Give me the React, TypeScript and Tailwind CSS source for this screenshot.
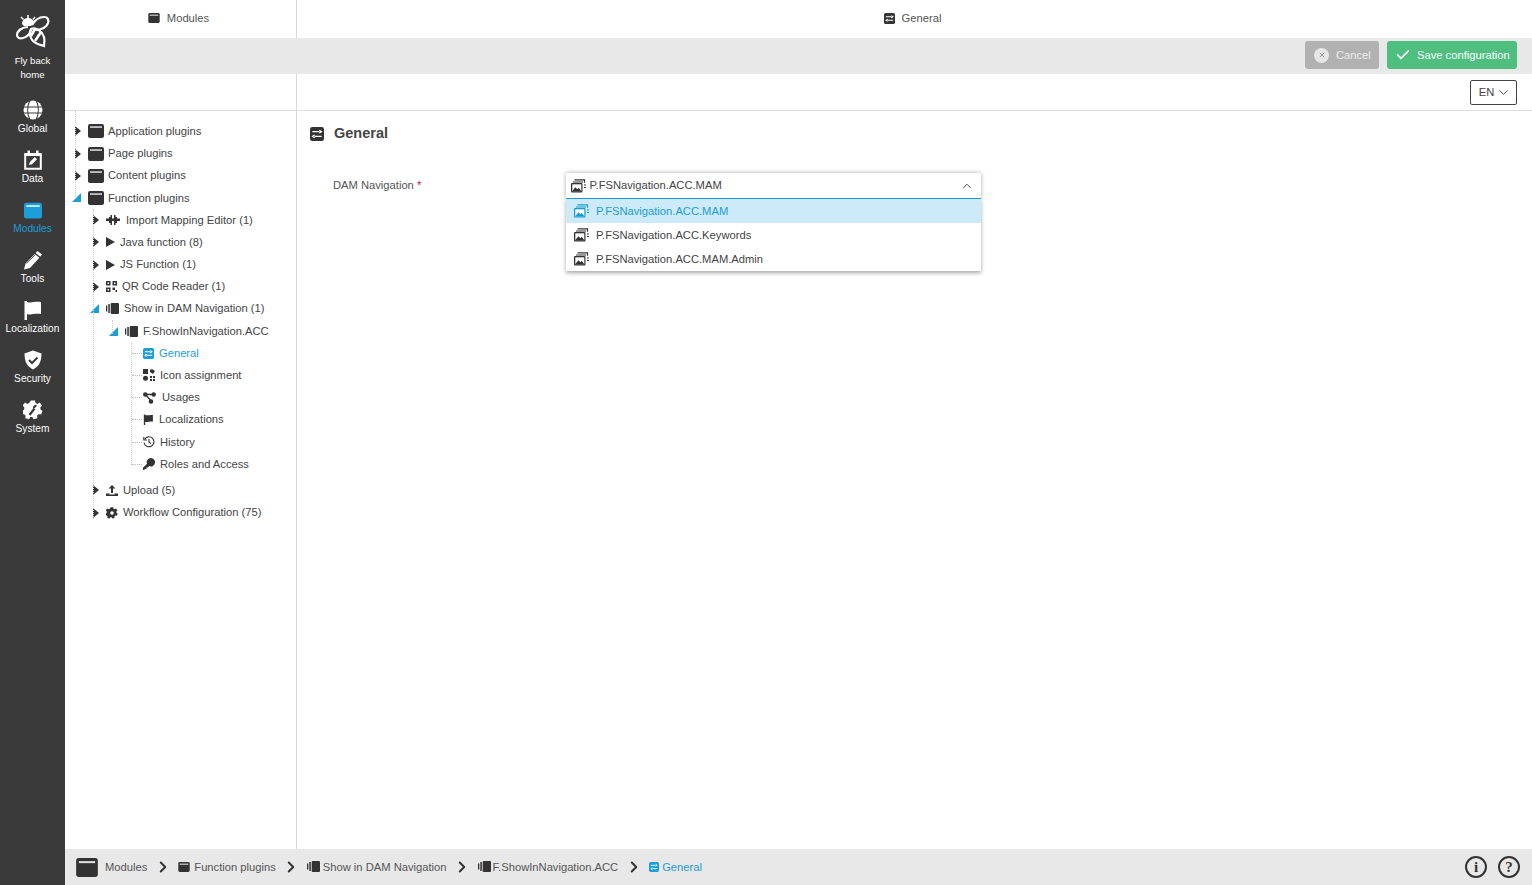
import type { ReactNode } from "react";
import { Check, ChevronDown, ChevronRight, ChevronUp, X } from "lucide-react";

const DARK = "#3a3a3a";
const BLUE = "#1b9ed8";

function Bee() {
  return (
    <svg width="36" height="34" viewBox="0 0 36 34" fill="none" stroke="#fff" strokeWidth="2.2">
      <path d="M6 3l2.5 2.5M13 1v4M20 3l-2 2.5" strokeWidth="1.6" />
      <path d="M7 10c0-4 3-6 6-6s6 2 6 5l-3 3H9z" fill="#fff" stroke="none" />
      <path d="M17 11c3-5 8-8 12-8 4 0 5 3 4 6-1 4-6 7-13 7" />
      <path d="M13 13C7 13 2 17 2 21c0 3 3 4 6 3 4-1 7-4 8-8" />
      <path d="M16 15c5-2 11 2 13 8 1 3 0 7 0 9-3-1-8-2-11-5-3-3-4-8-2-12z" />
      <path d="M20 15l-4 7M26 18l-6 9" strokeWidth="2.6" />
    </svg>
  );
}

function Globe() {
  return (
    <svg width="20" height="20" viewBox="0 0 20 20">
      <circle cx="10" cy="10" r="9.5" fill="#fff" />
      <path d="M0 7h20M0 13h20M7 0c-3 6-3 14 0 20M13 0c3 6 3 14 0 20" stroke={DARK} strokeWidth="1.2" fill="none" />
    </svg>
  );
}

function DataIcon() {
  return (
    <svg width="18" height="20" viewBox="0 0 18 20">
      <path d="M1.2 4h15.6v14.8H1.2z" fill="none" stroke="#fff" strokeWidth="2" />
      <path d="M1 3h16v3H1zM3.5 0.5h2.5v4H3.500zM12 .5h2.500v4H12z" fill="#fff" />
      <path d="M5 15l.8-3 5-5 2.200 2.200-5 5z" fill="#fff" />
    </svg>
  );
}

function ModuleIcon({ color = "#333", w = 16, h = 14 }: { color?: string; w?: number; h?: number }) {
  return (
    <svg width={w} height={h} viewBox="0 0 16 14">
      <path d="M2 0h12a2 2 0 0 1 2 2v10a2 2 0 0 1-2 2H2a2 2 0 0 1-2-2V2a2 2 0 0 1 2-2z" fill={color} />
      <path d="M2 2.300h12v1.500H2z" fill="#fff" fillOpacity="0.85" />
    </svg>
  );
}

function Pencil() {
  return (
    <svg width="20" height="20" viewBox="0 0 20 20" fill="#fff">
      <path d="M14.500 1l4.500 3.500-1.800 2.200-4.500-3.700zM11.800 4L16.300 7.700 7 18 1 19.500l1.500-6z" />
      <path d="M3.500 13.500l9-9" stroke={DARK} strokeWidth="0.8" />
    </svg>
  );
}

function Flag({ color = "#fff", size = 20 }: { color?: string; size?: number }) {
  return (
    <svg width={size} height={size} viewBox="0 0 20 20" fill={color}>
      <path d="M1.500 1H4v1c4 1.500 8-1 14 0v12c-6-1-10 1.500-14 0v6H1.500z" />
    </svg>
  );
}

function Shield() {
  return (
    <svg width="20" height="20" viewBox="0 0 20 20">
      <path d="M10 .5l8.500 3c0 8-2.500 13-8.500 16C4 16.500 1.500 11.500 1.500 3.500z" fill="#fff" />
      <path d="M6 10l3 3 5.500-5.500" stroke={DARK} strokeWidth="2" fill="none" />
    </svg>
  );
}

function Gear({ color = "#fff", size = 20, hole = DARK, wrench }: { color?: string; size?: number; hole?: string; wrench?: boolean }) {
  return (
    <svg width={size} height={size} viewBox="0 0 20 20">
      <path
        d="M8 .5h4l.6 2.600 1.800.8 2.300-1.400 2.400 3-1.800 2 .2 2 2 1.500-1.400 3.600-2.600-.4-1.400 1.400.2 2.700-3.700.9-1.300-2.300h-2l-1.300 2.300-3.700-.9.200-2.700-1.400-1.400-2.600.4L-.8 11l2-1.500.2-2-1.800-2 2.400-3 2.300 1.400 1.800-.8z"
        fill={color}
      />
      {wrench ? (
        <path d="M6.500 15l5-6.500M11 8a2 2 0 0 1 2.500-2" stroke={hole} strokeWidth="2.200" fill="none" />
      ) : (
        <circle cx="10" cy="10" r="3" fill={hole} />
      )}
    </svg>
  );
}

function GeneralIcon({ color = "#333", size = 12 }: { color?: string; size?: number }) {
  return (
    <svg width={size} height={size} viewBox="0 0 12 12">
      <rect width="12" height="12" rx="2" fill={color} />
      <path d="M2 4h6M8 2.800L9.800 4 8 5.200M10 8H4M4 6.800L2.200 8 4 9.200" stroke="#fff" strokeWidth="1.100" fill="none" />
    </svg>
  );
}

function NavPluginIcon({ color = "#333", size = 13 }: { color?: string; size?: number }) {
  return (
    <svg width={size} height={size} viewBox="0 0 13 13" fill={color}>
      <rect x="0" y="3.500" width="1.300" height="6" />
      <rect x="2.300" y="2" width="1.500" height="9" />
      <rect x="4.700" y="1" width="8.300" height="11" rx="1" />
    </svg>
  );
}

function MamIcon({ color = "#333" }: { color?: string }) {
  return (
    <svg width="15" height="14" viewBox="0 0 15 14">
      <path d="M3.500 .8h10v3M2 3h10" stroke={color} strokeWidth="1.200" fill="none" />
      <rect x="0" y="4" width="11.500" height="9.500" rx="1" fill={color} />
      <rect x="1.300" y="5.300" width="9" height="6.900" fill="#fff" />
      <path d="M1.300 12.200l3-4 2 2 1.500-1.500 2.500 3.500z" fill={color} />
      <path d="M13 6h2M13 8.500h2" stroke={color} strokeWidth="1.200" />
    </svg>
  );
}

function Arrow({ open }: { open?: boolean }) {
  if (open) {
    return (
      <svg width="9" height="9" viewBox="0 0 9 9">
        <path d="M0 9L9 0v9z" fill={BLUE} />
      </svg>
    );
  }
  return (
    <svg width="6" height="10" viewBox="0 0 6 10" className="ml-[3px]">
      <path d="M0 0l6 5-6 5z" fill="#333" />
    </svg>
  );
}

const puzzle = (
  <svg width="14" height="10" viewBox="0 0 14 10" fill="#333">
    <path d="M0 3.500h3V2h1.500V0H6v3.500h2V0h1.500v2H11v1.500h3V6h-3v2H9.500v2H8V6H6v4H4.500V8H3V6H0z" />
  </svg>
);
const play = (
  <svg width="9" height="10" viewBox="0 0 9 10">
    <path d="M0 0l9 5-9 5z" fill="#333" />
  </svg>
);
const qr = (
  <svg width="11" height="11" viewBox="0 0 11 11" fill="#333">
    <path d="M0 0h4.500v4.500H0zM6.500 0H11v4.500H6.500zM0 6.500h4.500V11H0zM6.500 6.500H9V9H6.500zM9.500 9H11v2H9.500z" />
    <path d="M1.500 1.500h1.500V3H1.500zM8 1.500h1.500V3H8zM1.500 8h1.500v1.500H1.500z" fill="#fff" />
  </svg>
);
const iconAssign = (
  <svg width="12" height="12" viewBox="0 0 12 12" fill="#333">
    <path d="M0 0h5v5H0zM7 1l2-1 3 2-2 3-3-2zM0 9.300a2.500 2.500 0 1 1 5 0 2.500 2.500 0 0 1-5 0zM7 7h2v2H7zM10 7h2v2h-2zM7 10h2v2H7zM10 10h2v2h-2z" />
  </svg>
);
const usages = (
  <svg width="13" height="12" viewBox="0 0 13 12">
    <path d="M2 2.500l6.500 6.500M2 2.500h9" stroke="#333" strokeWidth="1.300" />
    <circle cx="2.300" cy="2.500" r="2.300" fill="#333" />
    <circle cx="10.700" cy="2.500" r="2.300" fill="#333" />
    <circle cx="8" cy="9.500" r="2.300" fill="#333" />
  </svg>
);
const history = (
  <svg width="12" height="12" viewBox="0 0 12 12" fill="none" stroke="#333" strokeWidth="1.100">
    <path d="M1.500 3.500A5 5 0 1 1 1 6.500" />
    <path d="M.8 1v3h3" />
    <path d="M6 3v3.300l2 1.200" />
  </svg>
);
const keyIcon = (
  <svg width="12" height="12" viewBox="0 0 12 12" fill="#333">
    <path d="M7.800 0a4.200 4.200 0 1 1-1.500 8.100L5 9.500H3.500V11H2l-1 1H0V9.800l4-4A4.200 4.200 0 0 1 7.800 0z" />
  </svg>
);
const upload = (
  <svg width="12" height="11" viewBox="0 0 12 11" fill="#333">
    <path d="M6 0l3.500 3.500h-2.500v4.500H5V3.500H2.500zM0 8.500h3.500v1h5v-1H12V11H0z" />
  </svg>
);

type Row = {
  label: string;
  pl: number;
  icon: ReactNode;
  iconW: number;
  gap: number;
  arrow?: "open" | "closed";
  active?: boolean;
};

const folder = <ModuleIcon />;

const rowsTop: Row[] = [
  { label: "Application plugins", pl: 7, icon: folder, iconW: 16, gap: 4, arrow: "closed" },
  { label: "Page plugins", pl: 7, icon: folder, iconW: 16, gap: 4, arrow: "closed" },
  { label: "Content plugins", pl: 7, icon: folder, iconW: 16, gap: 4, arrow: "closed" },
  { label: "Function plugins", pl: 7, icon: folder, iconW: 16, gap: 4, arrow: "open" },
  { label: "Import Mapping Editor (1)", pl: 25, icon: puzzle, iconW: 14, gap: 6, arrow: "closed" },
  { label: "Java function (8)", pl: 25, icon: play, iconW: 9, gap: 5, arrow: "closed" },
  { label: "JS Function (1)", pl: 25, icon: play, iconW: 9, gap: 5, arrow: "closed" },
  { label: "QR Code Reader (1)", pl: 25, icon: qr, iconW: 11, gap: 5, arrow: "closed" },
  { label: "Show in DAM Navigation (1)", pl: 25, icon: <NavPluginIcon />, iconW: 13, gap: 5, arrow: "open" },
  { label: "F.ShowInNavigation.ACC", pl: 44, icon: <NavPluginIcon />, iconW: 13, gap: 5, arrow: "open" },
  { label: "General", pl: 62, icon: <GeneralIcon color={BLUE} size={11} />, iconW: 11, gap: 5, active: true },
  { label: "Icon assignment", pl: 62, icon: iconAssign, iconW: 12, gap: 5 },
  { label: "Usages", pl: 62, icon: usages, iconW: 13, gap: 6 },
  { label: "Localizations", pl: 62, icon: <Flag color="#333" size={11} />, iconW: 11, gap: 5 },
  { label: "History", pl: 62, icon: history, iconW: 12, gap: 5 },
  { label: "Roles and Access", pl: 62, icon: keyIcon, iconW: 12, gap: 5 },
];

const rowsBottom: Row[] = [
  { label: "Upload (5)", pl: 25, icon: upload, iconW: 12, gap: 5, arrow: "closed" },
  { label: "Workflow Configuration (75)", pl: 25, icon: <Gear color="#333" hole="#fff" size={12} />, iconW: 12, gap: 5, arrow: "closed" },
];

function TreeRow({ row }: { row: Row }) {
  return (
    <div className="flex h-[22.2px] items-center" style={{ paddingLeft: row.pl }}>
      <span className="flex w-[16px] items-center">
        {row.arrow === "open" ? (
          <Arrow open />
        ) : row.arrow === "closed" ? (
          <Arrow />
        ) : (
          <span className="ml-[5px] w-[10px] border-t border-dotted border-[#bbb]" />
        )}
      </span>
      <span className="flex justify-center" style={{ width: row.iconW, marginRight: row.gap }}>
        {row.icon}
      </span>
      <span className={row.active ? "text-[#1b9ed8]" : "text-[#444]"}>{row.label}</span>
    </div>
  );
}

const nav = [
  { label: "Global", icon: <Globe /> },
  { label: "Data", icon: <DataIcon /> },
  { label: "Modules", icon: <ModuleIcon color={BLUE} w={18} h={17} />, active: true },
  { label: "Tools", icon: <Pencil /> },
  { label: "Localization", icon: <Flag /> },
  { label: "Security", icon: <Shield /> },
  { label: "System", icon: <Gear wrench /> },
];

const options = ["P.FSNavigation.ACC.MAM", "P.FSNavigation.ACC.Keywords", "P.FSNavigation.ACC.MAM.Admin"];

function Crumb({ icon, label, active, gap }: { icon: ReactNode; label: string; active?: boolean; gap: string }) {
  return (
    <span className={`flex items-center ${gap}`}>
      {icon}
      <span className={active ? "text-[#1b9ed8]" : "text-[#555]"}>{label}</span>
    </span>
  );
}

function Sep() {
  return <ChevronRight size={18} strokeWidth={2.6} className="mx-[6.5px] text-[#333]" />;
}

export default function App() {
  return (
    <div className="flex h-[885px] w-[1532px] overflow-hidden bg-white font-['Liberation_Sans',Arial,sans-serif] text-[11.2px]">
      <aside className="flex w-[65px] shrink-0 flex-col items-center bg-[#3a3a3a] text-white">
        <div className="flex h-[88px] flex-col items-center pt-[14px]">
          <Bee />
          <span className="mt-[6px] text-center text-[9.6px] leading-[14px]">
            Fly back
            <br />
            home
          </span>
        </div>
        <div className="flex flex-col items-center">
          {nav.map((n) => (
            <div key={n.label} className="flex h-[50px] w-[65px] flex-col items-center pt-[12px]">
              <span className="flex h-[20px] items-center">{n.icon}</span>
              <span className={`mt-[3px] text-[10.2px] leading-[12px] ${n.active ? "text-[#1b9ed8]" : "text-white"}`}>
                {n.label}
              </span>
            </div>
          ))}
        </div>
      </aside>

      <div className="flex min-w-0 flex-1 flex-col">
        <header className="flex h-[38px] shrink-0">
          <div className="flex w-[232px] items-center justify-center gap-[7px] border-r border-[#d8d8d8] pr-[4px] pb-[2px] text-[#555]">
            <ModuleIcon w={12} h={10} />
            <span>Modules</span>
          </div>
          <div className="flex flex-1 items-center justify-center gap-[7px] pr-[4px] pb-[2px] text-[#555]">
            <GeneralIcon size={11} />
            <span>General</span>
          </div>
        </header>

        <div className="flex h-[36px] shrink-0 items-center justify-end gap-[8px] bg-[#e8e8e8] pr-[15px] pb-[2px]">
          <button className="flex h-[28px] w-[74px] items-center gap-[7px] rounded-[3px] bg-[#b1b1b1] pl-[9px] whitespace-nowrap text-[#ececec]">
            <span className="flex h-[15px] w-[15px] items-center justify-center rounded-full bg-[#e6e6e6]">
              <X size={8} className="text-[#999]" strokeWidth={3} />
            </span>
            <span>Cancel</span>
          </button>
          <button className="flex h-[28px] w-[130px] items-center gap-[6px] rounded-[3px] bg-[#4fbf80] pl-[8px] whitespace-nowrap text-white">
            <Check size={16} strokeWidth={2.5} />
            <span>Save configuration</span>
          </button>
        </div>

        <div className="flex h-[37px] shrink-0 border-b border-[#dedede]">
          <div className="w-[232px] border-r border-[#d8d8d8]" />
          <div className="flex flex-1 items-start justify-end pt-[6px] pr-[15px]">
            <button className="flex h-[25px] w-[47px] items-center justify-center gap-[2px] rounded-[2px] border border-[#444] pl-[3px] text-[#444]">
              EN
              <ChevronDown size={15} strokeWidth={1.500} />
            </button>
          </div>
        </div>

        <div className="flex min-h-0 flex-1">
          <nav className="relative w-[232px] shrink-0 border-r border-[#d8d8d8] pt-[9.3px]">
            <span className="absolute top-[0px] left-[10px] h-[88px] border-l border-dotted border-[#ccc]" />
            <span className="absolute top-[98px] left-[28px] h-[310px] border-l border-dotted border-[#ccc]" />
            <span className="absolute top-[209px] left-[47px] h-[14px] border-l border-dotted border-[#ccc]" />
            <span className="absolute top-[232px] left-[66px] h-[122px] border-l border-dotted border-[#ccc]" />
            {rowsTop.map((r) => (
              <TreeRow key={r.label} row={r} />
            ))}
            <div className="mt-[4px]">
              {rowsBottom.map((r) => (
                <TreeRow key={r.label} row={r} />
              ))}
            </div>
          </nav>

          <main className="flex-1 pt-[12px] pl-[13px]">
            <div className="flex h-[22px] items-center gap-[10px] text-[14.5px] font-bold text-[#444]">
              <GeneralIcon size={14} />
              General
            </div>
            <div className="mt-[28px] flex pl-[23px]">
              <label className="mt-[4px] w-[233px] text-[#555]">
                DAM Navigation <span className="text-[#c2185b]">*</span>
              </label>
              <div className="relative h-[26px] w-[415px]">
                <div className="flex h-[26px] items-center rounded-t-[2px] border-b border-[#1b9ed8] bg-white pr-[7px] pl-[5px] text-[#444] shadow-[0_0_4px_rgba(0,0,0,0.35)]">
                  <MamIcon />
                  <span className="ml-[3.5px] flex-1">{options[0]}</span>
                  <ChevronUp size={14} strokeWidth={1.500} className="text-[#333]" />
                </div>
                <ul className="absolute top-[26px] right-0 left-0 bg-white shadow-[0_2px_4px_rgba(0,0,0,0.35)]">
                  {options.map((o, i) => (
                    <li
                      key={o}
                      className={`flex h-[24px] items-center gap-[7px] pl-[8px] ${i === 0 ? "bg-[#cdeaf8] text-[#1b9ed8]" : "text-[#444]"}`}
                    >
                      <MamIcon color={i === 0 ? BLUE : "#333"} />
                      {o}
                    </li>
                  ))}
                </ul>
              </div>
            </div>
          </main>
        </div>

        <footer className="flex h-[36px] shrink-0 items-center bg-[#e8e8e8] pr-[12px] pl-[11px]">
          <ModuleIcon w={22} h={19} />
          <span className="ml-[7px] text-[#555]">Modules</span>
          <Sep />
          <Crumb icon={<ModuleIcon w={12} h={10} />} label="Function plugins" gap="gap-[4px]" />
          <Sep />
          <Crumb icon={<NavPluginIcon size={13} />} label="Show in DAM Navigation" gap="gap-[3px]" />
          <Sep />
          <Crumb icon={<NavPluginIcon size={13} />} label="F.ShowInNavigation.ACC" gap="gap-[2px]" />
          <Sep />
          <Crumb icon={<GeneralIcon color={BLUE} size={10} />} label="General" active gap="gap-[3px]" />
          <div className="ml-auto flex items-center gap-[11px] text-[#333]">
            <span className="flex h-[22px] w-[22px] items-center justify-center rounded-full border-2 border-[#333] font-['Liberation_Serif',serif] text-[15px] font-bold">
              i
            </span>
            <span className="flex h-[22px] w-[22px] items-center justify-center rounded-full border-2 border-[#333] font-['Liberation_Serif',serif] text-[15px] font-bold">
              ?
            </span>
          </div>
        </footer>
      </div>
    </div>
  );
}
